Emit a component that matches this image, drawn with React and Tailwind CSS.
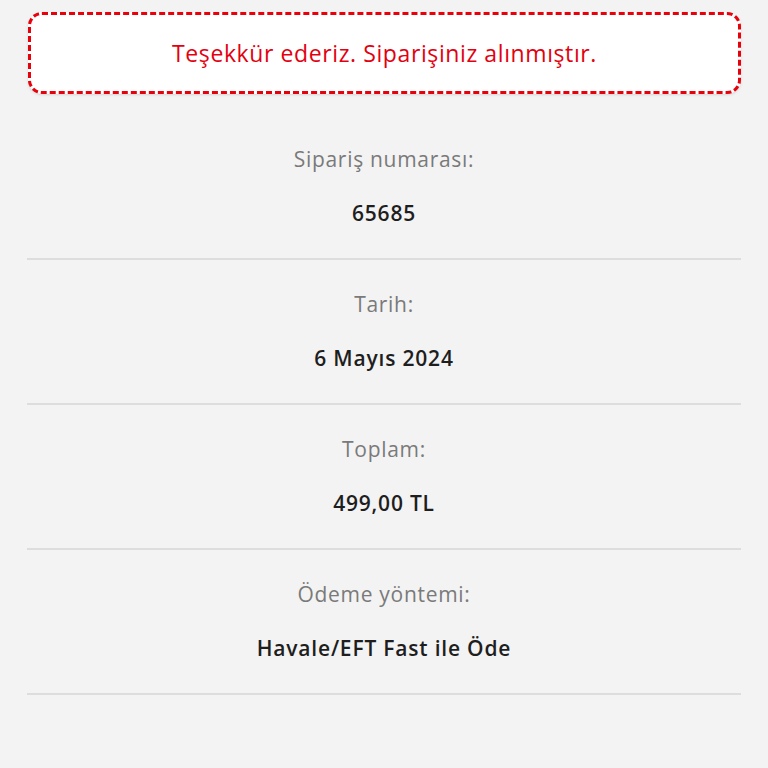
export default function App() {
  const rows = [
    { label: "Sipariş numarası:", value: "65685" },
    { label: "Tarih:", value: "6 Mayıs 2024" },
    { label: "Toplam:", value: "499,00 TL" },
    { label: "Ödeme yöntemi:", value: "Havale/EFT Fast ile Öde" },
  ];

  return (
    <div
      className="min-h-screen bg-[#f3f3f3] pt-3"
      style={{ fontFamily: '"Open Sans", "Noto Sans", sans-serif' }}
    >
      <div className="mx-[27px] ml-[28px] flex h-[82px] items-center justify-center rounded-[14px] border-[3px] border-dashed border-[#e8000b] bg-white shadow-sm">
        <p className="text-[23px] tracking-[0.6px] text-[#e3000f]">
          Teşekkür ederiz. Siparişiniz alınmıştır.
        </p>
      </div>

      <ul className="mx-[27px] mt-[21px]">
        {rows.map((row) => (
          <li
            key={row.label}
            className="flex h-[145px] flex-col items-center border-b-2 border-[#dddddd] pt-[29px]"
          >
            <span className="text-[21px] leading-[30px] tracking-[0.7px] text-[#7a7a7a]">
              {row.label}
            </span>
            <span className="mt-6 text-[21px] font-semibold leading-[30px] tracking-[0.8px] text-[#1e1e1e]">
              {row.value}
            </span>
          </li>
        ))}
      </ul>
    </div>
  );
}
